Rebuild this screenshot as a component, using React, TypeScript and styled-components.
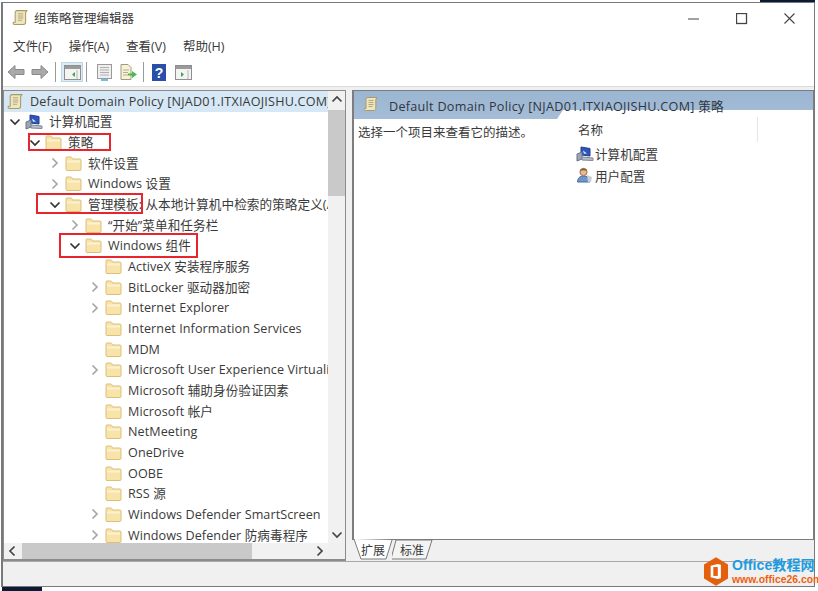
import React from "react";
import styled, { createGlobalStyle } from "styled-components";

const Global = createGlobalStyle`
  html, body { margin: 0; padding: 0; background: #fff; }
  body { width: 818px; height: 591px; overflow: hidden; font-family: "Open Sans", "Noto Sans CJK SC", sans-serif; color: #3a3a3a; }
`;

const Page = styled.div`
  position: relative; width: 818px; height: 591px; padding: 2px 3px 4px 1px; box-sizing: border-box;
`;
const Win = styled.div`
  height: 100%; box-sizing: border-box; display: flex; flex-direction: column;
  border: 1px solid #77797c; border-width: 1px 1px 1px 2px; background: #fff;
`;
const TitleBar = styled.div`
  height: 29px; display: flex; align-items: center; padding: 0 0 0 9px; gap: 5px; font-size: 12.5px; flex: none;
`;
const TitleText = styled.span` flex: 1; `;
const WinBtns = styled.div` display: flex; margin-top: 2px; `;
const WinBtn = styled.div` width: 48px; height: 30px; display: flex; align-items: center; justify-content: center; `;
const MenuBar = styled.div`
  height: 26px; display: flex; align-items: center; padding-left: 10px; gap: 17px; font-size: 12.5px; flex: none;
`;
const Toolbar = styled.div`
  height: 28px; display: flex; align-items: center; padding-left: 1px; flex: none; border-bottom: 1px solid #dcdcdc; background: #fff;
`;
const ToolBtn = styled.div<{ $on?: boolean; $ml?: number }>`
  width: ${p => (p.$on ? 22 : 24)}px; height: 20px; display: flex; align-items: center; justify-content: center; flex: none;
  margin-left: ${p => p.$ml ?? 0}px;
  background: ${p => (p.$on ? "#dcebf6" : "transparent")};
  box-shadow: ${p => (p.$on ? "inset 0 0 0 1px #bcd6e8" : "none")};
`;
const Sep = styled.div` width: 1px; height: 20px; background: #9a9a9a; margin: 0 3px; flex: none; `;
const Gutter = styled.div` height: 3px; background: #f0f0f0; flex: none; `;
const Body = styled.div`
  flex: 1; min-height: 0; display: flex; gap: 6px; background: #f0f0f0;
`;
const LeftPane = styled.div`
  width: 343px; flex: none; box-sizing: border-box; border: 1px solid #8b8b8b; border-width: 1px 1px 2px 1px; background: #fff;
  display: grid; grid-template-columns: minmax(0, 1fr) 17px; grid-template-rows: minmax(0, 1fr) 16px;
`;
const Tree = styled.div` overflow: hidden; min-width: 0; position: relative; `;
const Row = styled.div<{ $sel?: boolean; $lv: number }>`
  height: 20.66px; display: flex; align-items: center; white-space: nowrap; font-size: 12.6px;
  letter-spacing: ${p => (p.$sel ? ".2px" : ".08px")};
  padding-left: ${p => 3 + p.$lv * 20}px; background: ${p => (p.$sel ? "#d6e8f5" : "transparent")};
`;
const Twist = styled.span` width: 16px; height: 16px; flex: none; display: flex; align-items: center; justify-content: center; margin-right: 2px; `;
const Label = styled.span` margin-left: 6px; line-height: 17px; `;
const VBar = styled.div` background: #f1f1f1; display: flex; flex-direction: column; align-items: center; `;
const VThumb = styled.div` width: 17px; height: 86px; background: #c9c9c9; margin-top: 3px; `;
const Spacer = styled.div` flex: 1; `;
const Arrow = styled.div` height: 16px; width: 16px; display: flex; align-items: center; justify-content: center; flex: none; `;
const HBar = styled.div` background: #f1f1f1; display: flex; align-items: center; `;
const HThumb = styled.div` width: 230px; height: 16px; background: #c9c9c9; margin-left: 2px; `;
const Corner = styled.div` background: #f0f0f0; `;
const RightCol = styled.div` flex: 1; min-width: 0; display: flex; flex-direction: column; `;
const RightPane = styled.div`
  flex: 1; min-height: 0; box-sizing: border-box; border: 1px solid #7d7d7d; border-width: 1px 1px 1px 2px; background: #fff;
  display: flex; flex-direction: column;
`;
const Band = styled.div`
  position: relative; height: 28px; flex: none; display: flex; align-items: flex-start; padding: 5px 0 0 9px; box-sizing: border-box; gap: 10px;
  font-size: 12.6px; letter-spacing: .29px; color: #2f3640; white-space: nowrap;
  &::before {
    content: ""; position: absolute; inset: 0;
    background: linear-gradient(#9bb6d3, #a5bdd6);
    clip-path: polygon(0 0, 100% 0, 100% 19px, 209px 19px, 203px 100%, 0 100%);
  }
  & > * { position: relative; }
`;
const RightBody = styled.div` flex: 1; display: grid; grid-template-columns: 222px 1fr; margin-top: -6px; `;
const Desc = styled.div` font-size: 12.5px; padding: 9px 0 0 4px; `;
const ListCol = styled.div` padding-top: 4px; `;
const ListHead = styled.div`
  width: 179px; height: 25px; display: flex; align-items: center; font-size: 12.5px; padding-left: 2px; border-right: 1px solid #e6e6e6; margin-bottom: 1px;
`;
const ListRow = styled.div` height: 21.5px; display: flex; align-items: center; gap: 1px; font-size: 12.6px; `;
const Tabs = styled.div` height: 21px; flex: none; display: flex; align-items: flex-start; padding-left: 2px; `;
const TabSvg = styled.svg` display: block; position: absolute; left: 0; top: -1px; `;
const Tab = styled.div<{ $w: number }>`
  position: relative; width: ${p => p.$w}px; height: 20px; font-size: 12px; display: flex; align-items: center; justify-content: center;
  span { position: relative; }
`;
const Status = styled.div` height: 24px; flex: none; background: #f0f0f0; border-top: 1px solid #a8a8a8; `;
const Highlight = styled.div<{ $x: number; $y: number; $w: number; $h: number }>`
  position: absolute; left: ${p => p.$x}px; top: ${p => p.$y}px; width: ${p => p.$w}px; height: ${p => p.$h}px;
  border: 2px solid #e8242c; box-sizing: border-box; pointer-events: none;
`;
const Edge = styled.div<{ $l: number; $t: number; $w: number; $h: number }>`
  position: absolute; left: ${p => p.$l}px; top: ${p => p.$t}px; width: ${p => p.$w}px; height: ${p => p.$h}px; background: #0d1a33;
`;
const Watermark = styled.div`
  position: absolute; left: 704px; top: 557px; display: flex; align-items: center; gap: 4px;
`;
const WmText = styled.div` display: flex; flex-direction: column; font-family: "Liberation Sans", "Noto Sans CJK SC", sans-serif; font-weight: 700; `;
const WmTop = styled.div` font-size: 14px; line-height: 17px; color: #1e9be0; white-space: nowrap; letter-spacing: .1px; `;
const WmBot = styled.div` font-size: 10.4px; line-height: 12px; color: #ef5f10; white-space: nowrap; `;

const Folder = () => (
  <svg width="17" height="15" viewBox="0 0 17 15" style={{ flex: "none" }}>
    <path d="M1 3.5V1.8c0-.5.4-.8.8-.8h4c.4 0 .7.2.9.5L7.6 3H15c.5 0 1 .4 1 1v9.5c0 .6-.4 1-1 1H2c-.6 0-1-.4-1-1z" fill="#f8e3a9" stroke="#dcc07a" />
    <path d="M2 4.5h13v2H2z" fill="#fcf2d2" />
  </svg>
);
const Scroll = ({ s = 16 }: { s?: number }) => (
  <svg width={s} height={s} viewBox="0 0 16 16" style={{ flex: "none" }}>
    <path d="M4 1.5h10l-1.2 2v9c0 1-.8 2-2 2H2.2c-.8 0-1.2-.6-1.2-1.2 0-.5.4-.8 1-.8h1V3z" fill="#efe6c0" stroke="#a99a6a" />
    <path d="M5.5 4.5h5M5.5 6.5h5M5.5 8.5h5M5.5 10.5h4" stroke="#b5a878" />
  </svg>
);
const Computer = () => (
  <svg width="18" height="16" viewBox="0 0 18 16" style={{ flex: "none" }}>
    <path d="M5 1l9 1.5V10l-9-1z" fill="#2b56c0" stroke="#2a3d80" />
    <path d="M1 8l5-2v7l-5 2z" fill="#9aa5b5" stroke="#6a7484" />
    <path d="M6 11l11 1v2.5L6 14z" fill="#b8c0cc" stroke="#7d8796" />
    <path d="M7 4.5l4 3-3 .2z" fill="#dfe8fb" />
  </svg>
);
const User = () => (
  <svg width="18" height="16" viewBox="0 0 18 16" style={{ flex: "none" }}>
    <path d="M1.5 15c0-4 2.5-6 6-6s6.5 2 6.5 6z" fill="#6f96c8" stroke="#4d6b95" />
    <circle cx="7.5" cy="5" r="3.6" fill="#e6b98e" stroke="#9b6f4e" />
    <path d="M4 4c.5-3 6-3.500 7 0-2-1-5-1-7 0z" fill="#8a5a35" />
    <path d="M11 8l5 2-1 5h-3z" fill="#c8cfd8" />
  </svg>
);
const Down = ({ c = "#333" }: { c?: string }) => (
  <svg width="12" height="8" viewBox="0 0 12 8"><path d="M1.500 1.500L6 6l4.500-4.500" fill="none" stroke={c} strokeWidth="1.700" /></svg>
);
const Right = ({ c = "#a6a6a6" }: { c?: string }) => (
  <svg width="8" height="12" viewBox="0 0 8 12"><path d="M1.500 1.500L6 6l-4.500 4.500" fill="none" stroke={c} strokeWidth="1.700" /></svg>
);
const Left = ({ c = "#444" }: { c?: string }) => (
  <svg width="8" height="12" viewBox="0 0 8 12"><path d="M6.500 1.500L2 6l4.500 4.500" fill="none" stroke={c} strokeWidth="1.700" /></svg>
);
const Up = ({ c = "#444" }: { c?: string }) => (
  <svg width="12" height="8" viewBox="0 0 12 8"><path d="M1.500 6.500L6 2l4.500 4.500" fill="none" stroke={c} strokeWidth="1.700" /></svg>
);
const BigArrow = ({ flip }: { flip?: boolean }) => (
  <svg width="18" height="16" viewBox="0 0 18 16">
    <path d={flip ? "M17 8l-7-6.500v4H1v5h9v4z" : "M1 8l7-6.500v4h9v5H8v4z"} fill="#a9a9a9" stroke="#8a8a8a" />
  </svg>
);
const PaneIcon = ({ dot = "#3bab4a", left = true }: { dot?: string; left?: boolean }) => (
  <svg width="17" height="15" viewBox="0 0 17 15">
    <rect x=".5" y=".5" width="16" height="14" fill="#f4f4f4" stroke="#8f8f8f" />
    <rect x="1" y="1" width="15" height="3" fill="#9a9a9a" />
    <path d={left ? "M11 7v5l-3-2.500z" : "M6 7v5l3-2.500z"} fill={dot} />
    <path d="M13 5v9" stroke="#b5b5b5" />
  </svg>
);
const PageIcon = () => (
  <svg width="15" height="18" viewBox="0 0 15 18">
    <rect x=".5" y="1.500" width="14" height="14" fill="#eee" stroke="#9a9a9a" />
    <path d="M3 4.500h9M3 7h9M3 9.500h9M3 12h9" stroke="#b0b0b0" />
    <path d="M4 17h7" stroke="#4aa3d8" strokeWidth="1.500" />
  </svg>
);
const ExportIcon = () => (
  <svg width="17" height="17" viewBox="0 0 17 17">
    <path d="M1 .5h7l3 3v12H1z" fill="#f7f1d8" stroke="#a09a80" />
    <path d="M3 6h6M3 8.500h5M3 11h5" stroke="#b5ad8c" />
    <path d="M8 9.500h4V7l5 3.500-5 3.500v-2.500H8z" fill="#4fb84a" />
  </svg>
);
const Help = () => (
  <svg width="14" height="17" viewBox="0 0 14 17"><rect width="14" height="17" fill="#2a4fa8" />
    <text x="7" y="13.500" textAnchor="middle" fontSize="14" fontWeight="700" fill="#fff" fontFamily="Liberation Sans">?</text></svg>
);
const TabShape = ({ w, first }: { w: number; first?: boolean }) => (
  <TabSvg width={w + 8} height="22" viewBox={`0 0 ${w + 8} 22`}>
    <path d={first ? `M0 0 L7 20 H${w - 6} L${w} 1` : `M-1 20 L4 1 H${w} L${w - 6} 20 H-1`} fill={first ? "#fff" : "#f4f4f4"} stroke="#7a7a7a" />
  </TabSvg>
);

type Item = { t: string; lv: number; tw?: "d" | "r"; icon?: "f" | "s" | "c"; sel?: boolean };
const items: Item[] = [
  { t: "Default Domain Policy [NJAD01.ITXIAOJISHU.COM] 策略", lv: 0, icon: "s", sel: true },
  { t: "计算机配置", lv: 0, tw: "d", icon: "c" },
  { t: "策略", lv: 1, tw: "d" },
  { t: "软件设置", lv: 2, tw: "r" },
  { t: "Windows 设置", lv: 2, tw: "r" },
  { t: "管理模板: 从本地计算机中检索的策略定义(ADMX 文件)", lv: 2, tw: "d" },
  { t: "“开始”菜单和任务栏", lv: 3, tw: "r" },
  { t: "Windows 组件", lv: 3, tw: "d" },
  { t: "ActiveX 安装程序服务", lv: 4 },
  { t: "BitLocker 驱动器加密", lv: 4, tw: "r" },
  { t: "Internet Explorer", lv: 4, tw: "r" },
  { t: "Internet Information Services", lv: 4 },
  { t: "MDM", lv: 4 },
  { t: "Microsoft User Experience Virtualization", lv: 4, tw: "r" },
  { t: "Microsoft 辅助身份验证因素", lv: 4 },
  { t: "Microsoft 帐户", lv: 4 },
  { t: "NetMeeting", lv: 4 },
  { t: "OneDrive", lv: 4 },
  { t: "OOBE", lv: 4 },
  { t: "RSS 源", lv: 4 },
  { t: "Windows Defender SmartScreen", lv: 4, tw: "r" },
  { t: "Windows Defender 防病毒程序", lv: 4, tw: "r" },
];

export default function App() {
  return (
    <Page>
      <Global />
      <Win>
        <TitleBar>
          <Scroll s={17} />
          <TitleText>组策略管理编辑器</TitleText>
          <WinBtns>
            <WinBtn><svg width="12" height="2"><path d="M0 1h11" stroke="#444" /></svg></WinBtn>
            <WinBtn><svg width="12" height="12"><rect x=".5" y=".5" width="10" height="10" fill="none" stroke="#444" strokeWidth="1.300" /></svg></WinBtn>
            <WinBtn><svg width="12" height="12"><path d="M.5.5l10 10M10.500.5l-10 10" stroke="#444" strokeWidth="1.100" /></svg></WinBtn>
          </WinBtns>
        </TitleBar>
        <MenuBar>
          <span>文件(F)</span><span>操作(A)</span><span>查看(V)</span><span>帮助(H)</span>
        </MenuBar>
        <Toolbar>
          <ToolBtn><BigArrow /></ToolBtn>
          <ToolBtn><BigArrow flip /></ToolBtn>
          <Sep />
          <ToolBtn $on $ml={2}><PaneIcon /></ToolBtn>
          <Sep />
          <ToolBtn $ml={2}><PageIcon /></ToolBtn>
          <ToolBtn><ExportIcon /></ToolBtn>
          <Sep />
          <ToolBtn><Help /></ToolBtn>
          <ToolBtn><PaneIcon left={false} /></ToolBtn>
        </Toolbar>
        <Gutter />
        <Body>
          <LeftPane>
            <Tree>
              {items.map(it => (
                <Row key={it.t} $lv={it.lv} $sel={it.sel}>
                  {it.icon !== "s" && (
                    <Twist>{it.tw === "d" ? <Down /> : it.tw === "r" ? <Right /> : null}</Twist>
                  )}
                  {it.icon === "s" ? <Scroll s={17} /> : it.icon === "c" ? <Computer /> : <Folder />}
                  <Label>{it.t}</Label>
                </Row>
              ))}
            </Tree>
            <VBar>
              <Arrow><Up /></Arrow>
              <VThumb />
              <Spacer />
              <Arrow><Down c="#444" /></Arrow>
            </VBar>
            <HBar>
              <Arrow><Left /></Arrow>
              <HThumb />
              <Spacer />
              <Arrow><Right c="#444" /></Arrow>
            </HBar>
            <Corner />
          </LeftPane>
          <RightCol>
            <RightPane>
              <Band><Scroll /><span>Default Domain Policy [NJAD01.ITXIAOJISHU.COM] 策略</span></Band>
              <RightBody>
                <Desc>选择一个项目来查看它的描述。</Desc>
                <ListCol>
                  <ListHead>名称</ListHead>
                  <ListRow><Computer />计算机配置</ListRow>
                  <ListRow><User />用户配置</ListRow>
                </ListCol>
              </RightBody>
            </RightPane>
            <Tabs>
              <Tab $w={38}><TabShape w={38} first /><span>扩展</span></Tab>
              <Tab $w={40}><TabShape w={40} /><span>标准</span></Tab>
            </Tabs>
          </RightCol>
        </Body>
        <Status />
      </Win>
      <Highlight $x={28} $y={133} $w={83} $h={18} />
      <Highlight $x={36} $y={193} $w={107} $h={21} />
      <Highlight $x={59} $y={233} $w={139} $h={25} />
      <Edge $l={760} $t={0} $w={55} $h={2} />
      <Edge $l={2} $t={587} $w={40} $h={4} />
      <Watermark>
        <svg width="24" height="29" viewBox="0 0 27 32">
          <path d="M13.500 0L27 8v16l-13.500 8L0 24V8z" fill="#e4600e" />
          <path d="M15.500 7.500l-8 2v13l8 2 3.500-1v-15z" fill="#fff" />
          <rect x="10.500" y="11" width="5" height="10" fill="#e4600e" />
        </svg>
        <WmText>
          <WmTop>Office教程网</WmTop>
          <WmBot>www.office26.com</WmBot>
        </WmText>
      </Watermark>
    </Page>
  );
}
